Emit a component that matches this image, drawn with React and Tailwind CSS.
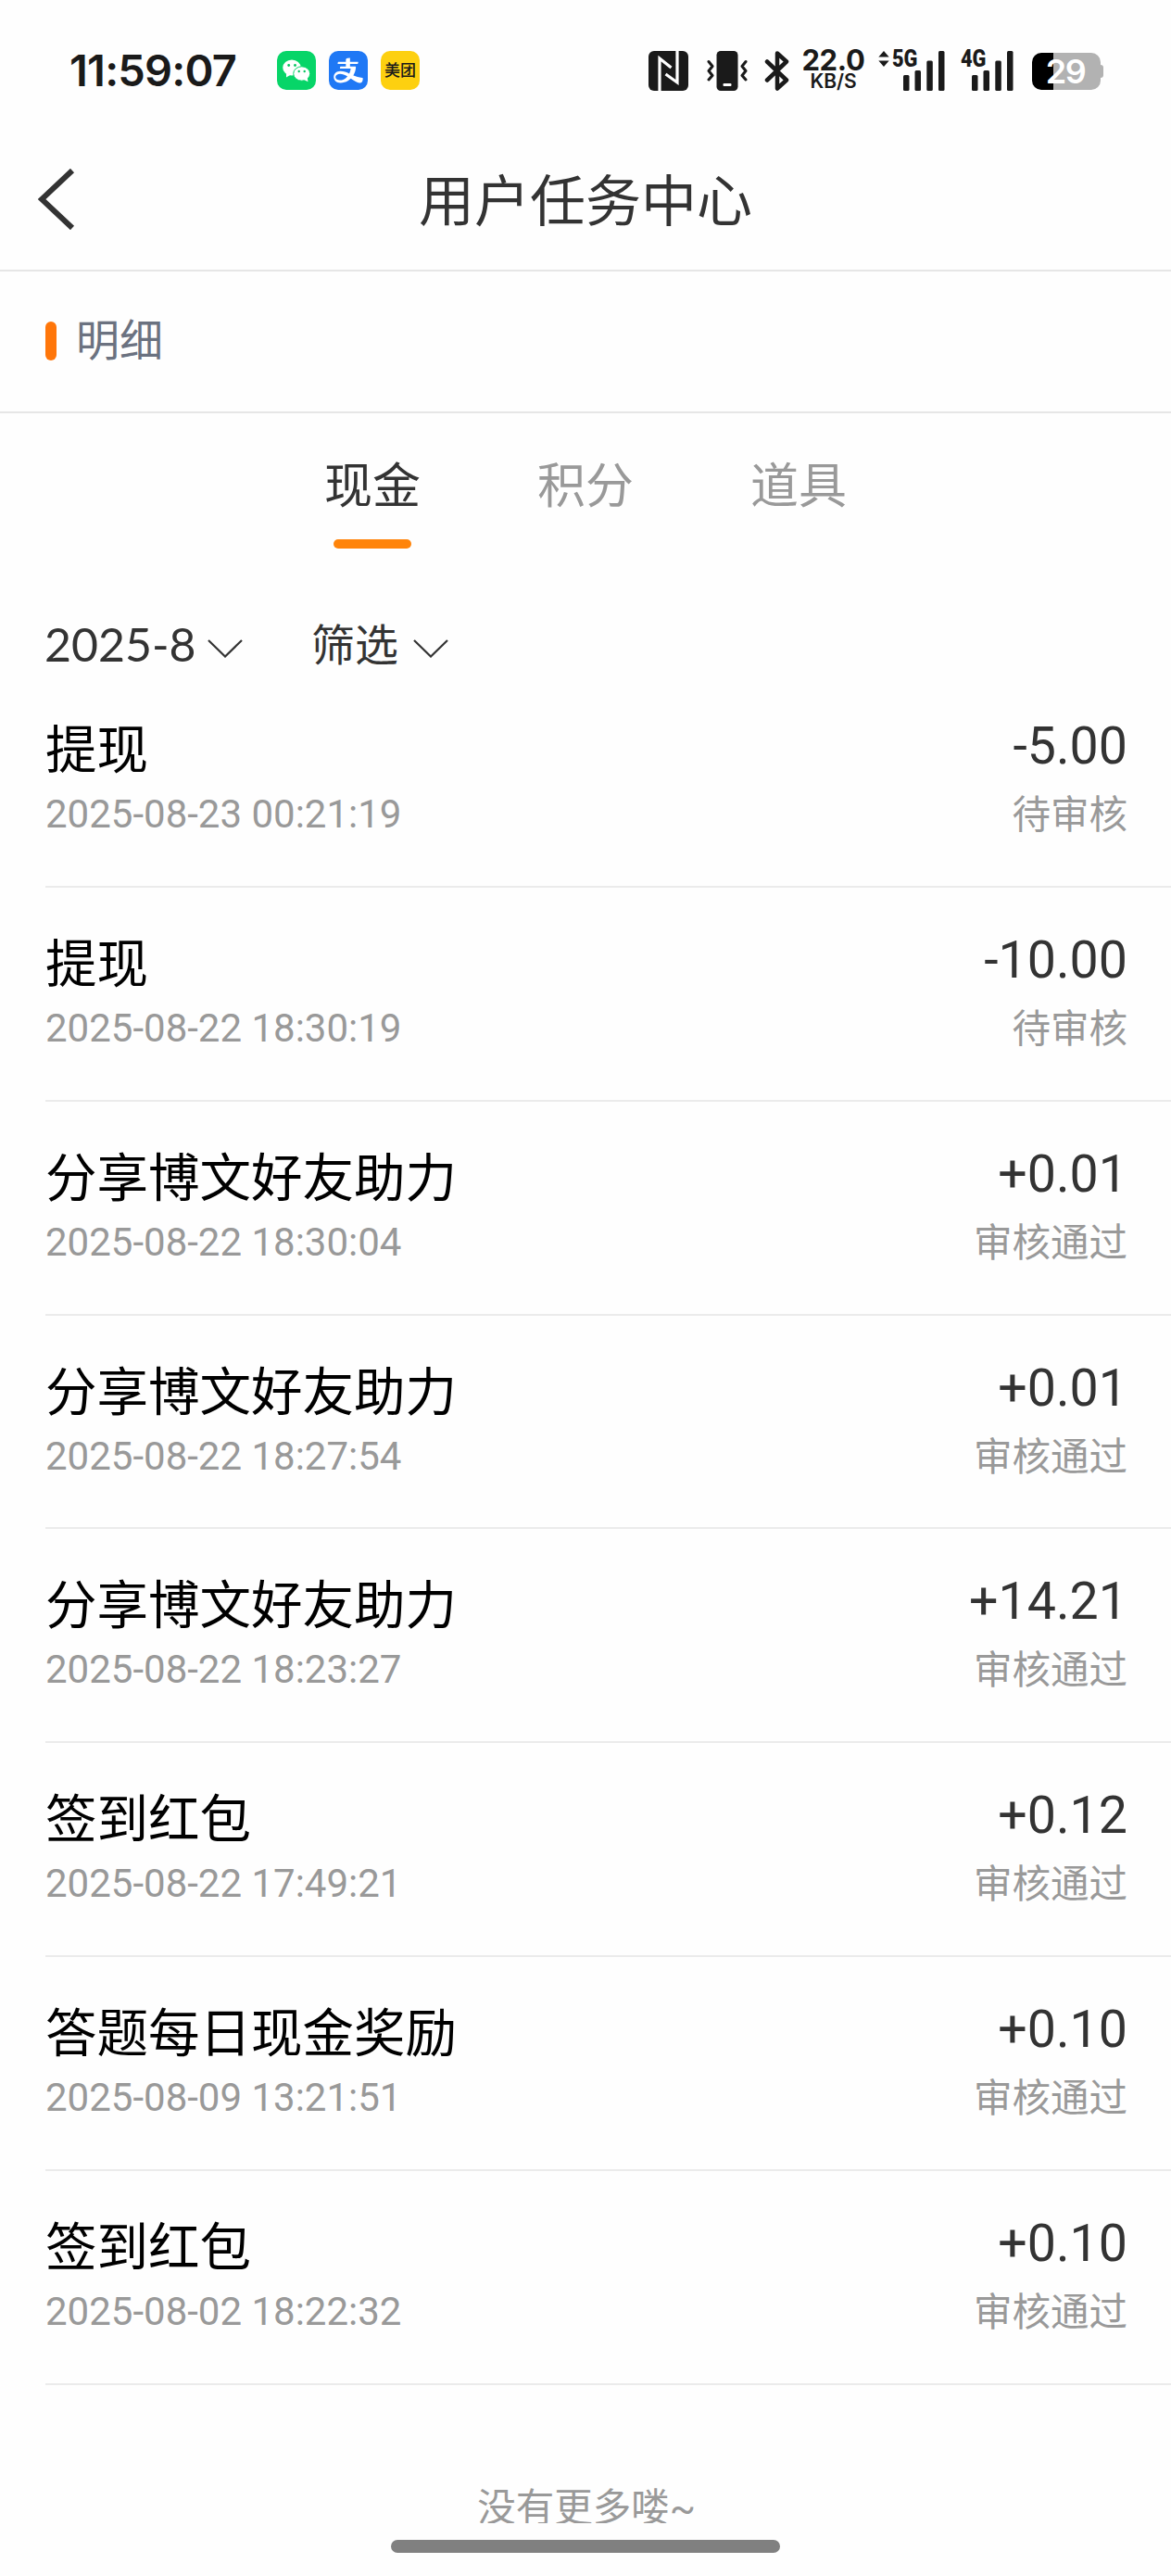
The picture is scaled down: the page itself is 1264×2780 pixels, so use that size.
import React, { useState } from 'react';
import { AiOutlineAlipay } from 'react-icons/ai';

const tabs = ['现金', '积分', '道具'];

const records = [
  { title: '提现', time: '2025-08-23 00:21:19', amount: '-5.00', status: '待审核' },
  { title: '提现', time: '2025-08-22 18:30:19', amount: '-10.00', status: '待审核' },
  { title: '分享博文好友助力', time: '2025-08-22 18:30:04', amount: '+0.01', status: '审核通过' },
  { title: '分享博文好友助力', time: '2025-08-22 18:27:54', amount: '+0.01', status: '审核通过' },
  { title: '分享博文好友助力', time: '2025-08-22 18:23:27', amount: '+14.21', status: '审核通过' },
  { title: '签到红包', time: '2025-08-22 17:49:21', amount: '+0.12', status: '审核通过' },
  { title: '答题每日现金奖励', time: '2025-08-09 13:21:51', amount: '+0.10', status: '审核通过' },
  { title: '签到红包', time: '2025-08-02 18:22:32', amount: '+0.10', status: '审核通过' },
];

const WechatIcon = () => (
  <svg viewBox="0 0 42 42" className="h-[42px] w-[42px]">
    <ellipse cx="16" cy="18" rx="9.8" ry="8.6" fill="#fff" />
    <path d="M10 24l0 4.500l5-3z" fill="#fff" />
    <ellipse cx="26.700" cy="24.500" rx="9" ry="7.700" fill="#fff" stroke="#07d568" strokeWidth="1" />
    <path d="M29 31l4.500 2.300l-.8-4.500z" fill="#fff" />
    <circle cx="12.700" cy="15.500" r="1.400" fill="#07c560" />
    <circle cx="19.500" cy="15.500" r="1.400" fill="#07c560" />
    <circle cx="23.700" cy="22" r="1.200" fill="#07c560" />
    <circle cx="29.700" cy="22" r="1.200" fill="#07c560" />
  </svg>
);

const NfcIcon = () => (
  <svg viewBox="0 0 43 43" className="h-[43px] w-[43px]">
    <rect width="43" height="43" rx="6" fill="#1a1a1a" />
    <path d="M12 43V8l12.500 10M31 0v34L18.500 25" fill="none" stroke="#fff" strokeWidth="3.200" />
  </svg>
);

const VibrateIcon = () => (
  <svg viewBox="0 0 44 43" className="h-[43px] w-[44px]">
    <rect x="10.500" width="23" height="43" rx="4.500" fill="#1a1a1a" />
    <rect x="17.500" y="35" width="9" height="3" rx="1" fill="#fff" />
    <path
      d="M2 11.500l4 5-4 5 4 5-4 4.500M42 11.500l-4 5 4 5-4 5 4 4.500"
      fill="none"
      stroke="#1a1a1a"
      strokeWidth="3"
      strokeLinecap="round"
      strokeLinejoin="round"
    />
  </svg>
);

const BluetoothIcon = () => (
  <svg viewBox="0 0 28 43" className="h-[43px] w-[28px]">
    <path
      d="M3 11.500L24 31.500L14 40.500V2.500L24 11.500L3 31.500"
      fill="none"
      stroke="#1a1a1a"
      strokeWidth="4.500"
      strokeLinecap="round"
      strokeLinejoin="round"
    />
  </svg>
);

const SignalIcon = ({ label, arrows }) => (
  <div className="relative h-[43px] w-[56px]">
    <svg viewBox="0 0 56 43" className="h-[43px] w-[56px]">
      <g fill="#1a1a1a">
        <rect x="11" y="26" width="6.500" height="17" rx="1.500" />
        <rect x="23.500" y="21" width="6.500" height="22" rx="1.500" />
        <rect x="36.300" y="10.500" width="6.500" height="32.500" rx="1.500" />
        <rect x="49" y="0" width="6.500" height="43" rx="1.500" />
      </g>
    </svg>
    <span className="absolute -top-[2px] -left-px origin-left scale-x-[0.87] font-[Roboto] text-[25px] leading-[22px] font-black">
      {label}
    </span>
    {arrows && (
      <svg viewBox="0 0 12 18" className="absolute top-0 -left-[16px] h-[17px] w-[12px]">
        <path d="M6 0l6 7H0zM6 18l6-7H0z" fill="#1a1a1a" />
      </svg>
    )}
  </div>
);

const Battery = () => (
  <div className="flex items-center pt-[2px]">
    <div className="flex h-[40px] w-[74px] items-center justify-center rounded-[10px] bg-[linear-gradient(to_right,#000_23px,#b2b2b2_23px)] pr-[2px]">
      <span className="text-[36px] leading-none font-semibold tracking-[-1.5px] text-white">29</span>
    </div>
    <div className="h-[14px] w-[3px] rounded-r-[3px] bg-[#b2b2b2]" />
  </div>
);

const Chevron = () => (
  <svg viewBox="0 0 38 20" className="mt-[5px] h-[20px] w-[38px]">
    <path d="M1 1l18 17.500L37 1" fill="none" stroke="#333" strokeWidth="2.200" />
  </svg>
);

const StatusBar = () => (
  <div className="flex h-[152px] items-center justify-between pr-[73px] pl-[75px] font-[Inter,'Noto_Sans_CJK_SC',sans-serif] text-[#1a1a1a]">
    <div className="flex items-center">
      <span className="w-[224px] text-[47px] font-semibold tracking-[-0.8px]">11:59:07</span>
      <div className="flex gap-[14px]">
        <div className="h-[42px] w-[42px] rounded-[10px] bg-[#07d568]">
          <WechatIcon />
        </div>
        <div className="flex h-[42px] w-[42px] items-center justify-center rounded-[10px] bg-[#1f78f5]">
          <AiOutlineAlipay className="h-[36px] w-[36px] text-white" />
        </div>
        <div className="flex h-[42px] w-[42px] items-center justify-center rounded-[10px] bg-[#fdd010]">
          <span className="text-[17px] leading-none font-medium">美团</span>
        </div>
      </div>
    </div>
    <div className="flex items-center">
      <NfcIcon />
      <div className="ml-[20px]">
        <VibrateIcon />
      </div>
      <div className="ml-[18px]">
        <BluetoothIcon />
      </div>
      <div className="ml-[12px] flex w-[69px] flex-col items-center font-semibold">
        <span className="text-[31px] leading-[24px] font-bold tracking-[-0.3px]">22.0</span>
        <span className="text-[21px] leading-[22px]">KB/S</span>
      </div>
      <div className="ml-[30px]">
        <SignalIcon label="5G" arrows />
      </div>
      <div className="ml-[18px]">
        <SignalIcon label="4G" />
      </div>
      <div className="ml-[20px]">
        <Battery />
      </div>
    </div>
  </div>
);

const RecordRow = ({ title, time, amount, status }) => (
  <li className="ml-[49px] flex h-[230.86px] justify-between border-b-2 border-[#ebebeb] pt-[48px] pr-[47px]">
    <div className="flex flex-col">
      <span className="text-[55.5px] leading-[72px] text-black">{title}</span>
      <span className="text-[42px] leading-[64px] text-[#999]">{time}</span>
    </div>
    <div className="flex flex-col items-end">
      <span className="text-[55.5px] leading-[62px]">{amount}</span>
      <span className="text-[41.5px] leading-[85px] text-[#999]">{status}</span>
    </div>
  </li>
);

export default function App() {
  const [activeTab, setActiveTab] = useState('现金');

  return (
    <div className="flex h-[2780px] w-[1264px] flex-col overflow-hidden bg-[#fefefe] font-[Roboto,'Noto_Sans_CJK_SC',sans-serif] text-[#333]">
      <StatusBar />

      <header className="flex h-[141px] items-start border-b-2 border-[#e6e6e6] px-[41px] pt-[22px]">
        <button className="w-[100px] pt-[8px]">
          <svg viewBox="0 0 40 66" className="h-[66px] w-[40px]">
            <path d="M37 2L4 33L37 64" fill="none" stroke="#333" strokeWidth="6" />
          </svg>
        </button>
        <h1 className="flex-1 text-center text-[60px] leading-[90px]">用户任务中心</h1>
        <div className="w-[100px]" />
      </header>

      <div className="flex h-[153px] items-center border-b-2 border-[#e6e6e6] pb-[2px] pl-[49px]">
        <div className="h-[42px] w-[12px] rounded-full bg-[#ff760a]" />
        <span className="ml-[21px] text-[47px] leading-[70px] text-[#6b7280]">明细</span>
      </div>

      <nav className="flex h-[174px] justify-center gap-[126px] pt-[42px]">
        {tabs.map((tab) => (
          <button
            key={tab}
            onClick={() => setActiveTab(tab)}
            className={`flex flex-col items-center text-[52px] leading-[76px] ${tab === activeTab ? 'text-[#333]' : 'text-[#999]'}`}
          >
            {tab}
            {tab === activeTab && <span className="mt-[18px] h-[10px] w-[84px] rounded-full bg-[#ff840a]" />}
          </button>
        ))}
      </nav>

      <div className="flex h-[107px] items-center pt-[48px] pl-[48px]">
        <button className="flex items-center">
          <span className="w-[176px] pb-[6px] text-left font-[Lato,sans-serif] text-[50px] leading-none">2025-8</span>
          <Chevron />
        </button>
        <button className="ml-[74px] flex items-center">
          <span className="w-[110px] pb-[2px] text-left text-[47px] leading-none">筛选</span>
          <Chevron />
        </button>
      </div>

      <ul>
        {records.map((item) => (
          <RecordRow key={item.time} {...item} />
        ))}
      </ul>

      <div className="mt-[102px] h-[47px] shrink-0 overflow-hidden pl-[2px] text-center text-[41.5px] leading-[62px] text-[#999]">
        没有更多喽~
      </div>
      <div className="mx-auto mt-[18px] h-[14px] w-[420px] shrink-0 rounded-full bg-[#808080]" />
    </div>
  );
}
